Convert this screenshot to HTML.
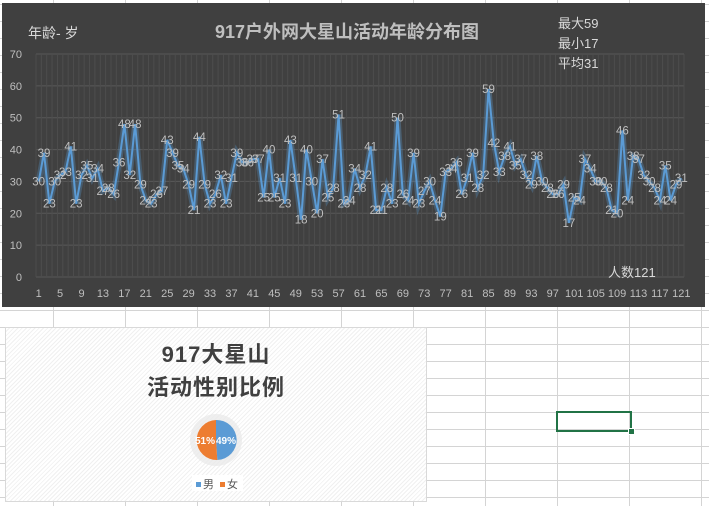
<!DOCTYPE html>
<html><head><meta charset="utf-8">
<style>
html,body{margin:0;padding:0;}
body{width:709px;height:506px;overflow:hidden;position:relative;background:#fff;
font-family:"Liberation Sans","Noto Sans CJK SC",sans-serif;
background-image:linear-gradient(#d4d4d4 1px,transparent 1px),linear-gradient(90deg,#d4d4d4 1px,transparent 1px);
background-size:72px 17px;background-position:53px 310px;}
#c1{position:absolute;left:2px;top:3px;width:703px;height:304px;background:#404040;}
#c2{position:absolute;left:5px;top:327px;width:420px;height:173px;border:1px solid #d9d9d9;
background:repeating-linear-gradient(135deg,#fff 0 2px,#f0f0f0 2px 3px);}
.t{position:absolute;white-space:nowrap;}
#sel{position:absolute;left:556px;top:411px;width:72px;height:17px;border:2px solid #217346;}
#sel:after{content:"";position:absolute;right:-5px;bottom:-5px;width:5px;height:5px;background:#217346;border:1px solid #fff;}
</style></head><body>
<div id="c1">
<svg id="sv" width="703" height="304" style="position:absolute;left:0;top:0"></svg>
<div class="t" style="left:0;width:690px;text-align:center;top:15px;font-size:18px;font-weight:bold;color:#bfbfbf">917户外网大星山活动年龄分布图</div>
<div class="t" style="left:26px;top:20px;font-size:14px;color:#d9d9d9">年龄- 岁</div>
<div class="t" style="left:556px;top:11px;font-size:13px;line-height:20px;color:#d9d9d9">最大59<br>最小17<br>平均31</div>
<div class="t" style="left:606px;top:259px;font-size:13px;color:#d9d9d9">人数121</div>
</div>
<div id="c2">
<div class="t" style="left:0;width:420px;text-align:center;top:10px;font-size:22px;line-height:33px;font-weight:bold;color:#404040;letter-spacing:1px">917大星山<br>活动性别比例</div>
<svg width="420" height="173" style="position:absolute;left:0;top:0">
<circle cx="210" cy="112" r="26" fill="#e8e8e8" opacity="0.7"/>
<path d="M210 112 L210 92 A20 20 0 0 1 211.3 132 Z" fill="#5b9bd5"/>
<path d="M210 112 L211.3 132 A20 20 0 0 1 210 92 Z" fill="#ed7d31"/>
<text x="199" y="116" font-size="10" font-weight="bold" fill="#fff" text-anchor="middle">51%</text>
<text x="220" y="116" font-size="10" font-weight="bold" fill="#fff" text-anchor="middle">49%</text>
<rect x="186" y="147" width="51" height="16" fill="#fff"/>
<rect x="190" y="154" width="5" height="5" fill="#5b9bd5"/>
<text x="197" y="160" font-size="11" fill="#595959">男</text>
<rect x="214" y="154" width="5" height="5" fill="#ed7d31"/>
<text x="221" y="160" font-size="11" fill="#595959">女</text>
</svg>
</div>
<div id="sel"></div>
<script>
var d=[30,39,23,30,32,33,41,23,32,35,31,34,27,28,26,36,48,32,48,29,24,23,26,27,43,39,35,34,29,21,44,29,23,26,32,23,31,39,36,36,37,37,25,40,25,31,23,43,31,18,40,30,20,37,25,28,51,23,24,34,28,32,41,21,21,28,23,50,26,24,39,23,27,30,24,19,33,34,36,26,31,39,28,32,59,42,33,38,41,35,37,32,29,38,30,28,26,26,29,17,25,24,37,34,30,30,28,21,20,46,24,38,37,32,30,28,24,35,24,29,31];
var s='',L=34,R=682,T=51,B=274;
function X(i){return L+(i+0.5)*(R-L)/121;}function Y(v){return B-v*(B-T)/70;}
for(var v=0;v<=70;v+=10){s+='<line x1="'+L+'" x2="'+R+'" y1="'+Y(v)+'" y2="'+Y(v)+'" stroke="#595959" stroke-width="1"/>';
s+='<text x="20" y="'+(Y(v)+4)+'" font-size="11" fill="#bfbfbf" text-anchor="end">'+v+'</text>';}
for(var i=0;i<=121;i++){var x=L+i*(R-L)/121;s+='<line x1="'+x+'" x2="'+x+'" y1="'+T+'" y2="'+B+'" stroke="#4d4d4d" stroke-width="1"/>';}
for(var i=0;i<121;i+=4)s+='<text x="'+X(i)+'" y="294" font-size="11" fill="#bfbfbf" text-anchor="middle">'+(i+1)+'</text>';
var p=d.map(function(v,i){return X(i).toFixed(1)+','+Y(v).toFixed(1)}).join(' ');
s+='<polyline points="'+p+'" fill="none" stroke="#5b9bd5" stroke-width="6" opacity="0.3"/>';
s+='<polyline points="'+p+'" fill="none" stroke="#5b9bd5" stroke-width="2"/>';
d.forEach(function(v,i){s+='<text x="'+X(i)+'" y="'+(Y(v)+4)+'" font-size="11.5" fill="#bfbfbf" text-anchor="middle">'+v+'</text>';});
document.getElementById('sv').innerHTML=s;
</script>
</body></html>
